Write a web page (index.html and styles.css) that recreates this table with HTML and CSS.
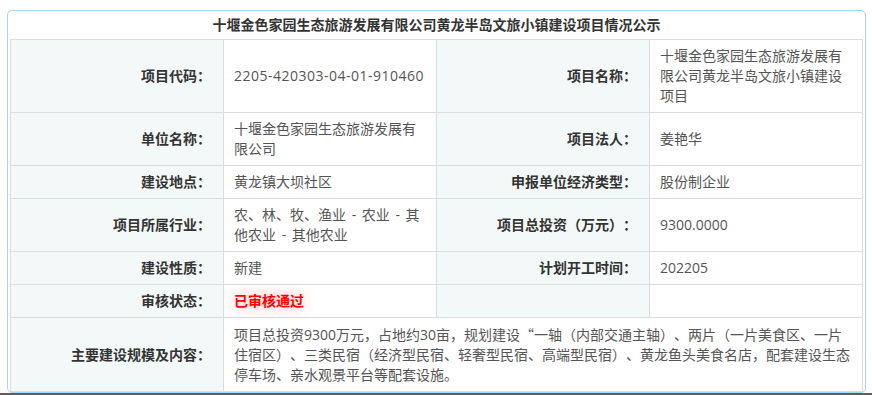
FILE: index.html
```html
<!DOCTYPE html>
<html lang="zh-CN">
<head>
<meta charset="utf-8">
<title>项目情况公示</title>
<link rel="stylesheet" href="styles.css">
</head>
<body>
<div class="panel">
  <div class="panel-title">十堰金色家园生态旅游发展有限公司黄龙半岛文旅小镇建设项目情况公示</div>
  <table class="info">
    <colgroup><col><col><col><col></colgroup>
    <tr>
      <th>项目代码：</th>
      <td><span class="code">2205-420303-04-01-910460</span></td>
      <th>项目名称：</th>
      <td>十堰金色家园生态旅游发展有限公司黄龙半岛文旅小镇建设项目</td>
    </tr>
    <tr>
      <th>单位名称：</th>
      <td>十堰金色家园生态旅游发展有限公司</td>
      <th>项目法人：</th>
      <td>姜艳华</td>
    </tr>
    <tr>
      <th>建设地点：</th>
      <td>黄龙镇大坝社区</td>
      <th>申报单位经济类型：</th>
      <td>股份制企业</td>
    </tr>
    <tr>
      <th>项目所属行业：</th>
      <td>农、林、牧、渔业 - 农业 - 其他农业 - 其他农业</td>
      <th>项目总投资（万元）：</th>
      <td>9300.0000</td>
    </tr>
    <tr>
      <th>建设性质：</th>
      <td>新建</td>
      <th>计划开工时间：</th>
      <td>202205</td>
    </tr>
    <tr>
      <th>审核状态：</th>
      <td><span class="status">已审核通过</span></td>
      <th></th>
      <td></td>
    </tr>
    <tr>
      <th>主要建设规模及内容：</th>
      <td colspan="3">项目总投资9300万元，占地约30亩，规划建设<span class="quote">“</span>一轴（内部交通主轴）、两片（一片美食区、一片住宿区）、三类民宿（经济型民宿、轻奢型民宿、高端型民宿）、黄龙鱼头美食名店，配套建设生态停车场、亲水观景平台等配套设施。</td>
    </tr>
  </table>
</div>
<div class="bottom-bar"></div>
</body>
</html>
```

FILE: styles.css
```css
html, body {
  margin: 0;
  padding: 0;
  background: #fff;
}
body {
  padding: 10px 6px 0 7px;
  font-family: "Open Sans", "Noto Sans CJK SC", sans-serif;
  font-size: 14px;
  color: #555;
  height: 395px;
  box-sizing: border-box;
  display: flex;
  flex-direction: column;
  overflow: hidden;
  text-spacing-trim: space-all;
}
.panel {
  border: 1px solid #a9d5f7;
  border-radius: 5px;
  padding: 0 2px 2px 2px;
  background: #fff;
  flex: 1;
  overflow: hidden;
}
.panel-title {
  height: 28px;
  line-height: 28px;
  text-align: center;
  font-weight: bold;
  color: #333;
  font-size: 14px;
}
.info {
  width: 100%;
  border-collapse: collapse;
  table-layout: fixed;
}
.info col {
  width: 25%;
}
.info th,
.info td {
  border: 1px solid #dcdcdc;
  line-height: 20px;
  padding: 6px 10px;
  vertical-align: middle;
  word-break: break-all;
  text-spacing-trim: space-all;
}
.info th {
  background: #f3f8f8;
  color: #333;
  font-weight: bold;
  text-align: right;
  padding-right: 12px;
}
.info td {
  color: #555;
  text-align: left;
  word-spacing: 2px;
}
.code {
  letter-spacing: 0.5px;
}
.quote {
  font-family: "Noto Sans CJK SC", sans-serif;
  font-feature-settings: "fwid" 1;
}
.status {
  color: #f00;
  font-weight: bold;
  text-shadow: 0 0 14px rgba(255, 0, 0, 0.35);
}
.bottom-bar {
  height: 2px;
  background: #5e5e5e;
  margin: 0 -6px 0 -7px;
}
```
